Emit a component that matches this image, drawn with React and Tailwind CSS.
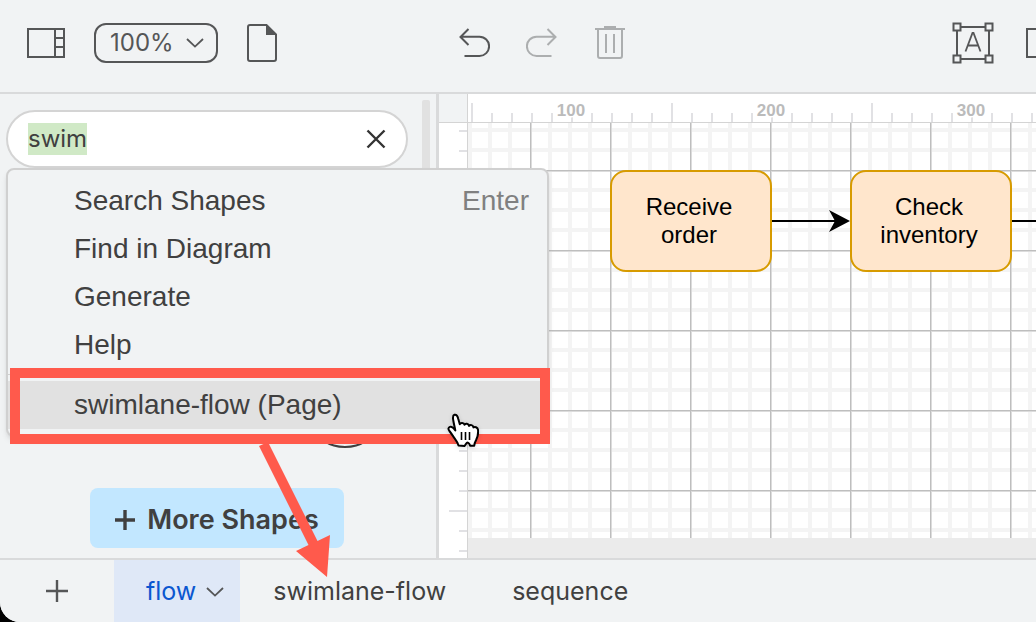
import React, { useEffect, useRef, useState } from "react";

const menuItems = [
  { label: "Search Shapes", shortcut: "Enter" },
  { label: "Find in Diagram" },
  { label: "Generate" },
  { label: "Help" },
];

const pages = ["flow", "swimlane-flow", "sequence"];

// --- Icons ---
const ChevronDown = () => (
  <svg width="18" height="10" viewBox="0 0 18 10" fill="none" stroke="currentColor" strokeWidth="1.8" aria-hidden="true">
    <path d="M1 1l8 7.6L17 1" />
  </svg>
);

const PanelIcon = () => (
  <svg width="38" height="30" viewBox="0 0 38 30" fill="none" stroke="currentColor" strokeWidth="2" aria-hidden="true">
    <path d="M1 1h36v28H1zM28 1v28M28 10h9M28 19h9" />
  </svg>
);

const FileIcon = () => (
  <svg width="30" height="38" viewBox="0 0 30 38" fill="none" stroke="currentColor" strokeWidth="2" aria-hidden="true">
    <path d="M3 1h16.5L29 10.5V35a2 2 0 0 1-2 2H3a2 2 0 0 1-2-2V3a2 2 0 0 1 2-2z" />
    <path d="M19 1v10h10z" fill="currentColor" stroke="none" />
  </svg>
);

const UndoIcon = () => (
  <svg width="32" height="30" viewBox="-1 0 32 30" fill="none" stroke="currentColor" strokeWidth="2" aria-hidden="true">
    <path d="M9.5 1L1.5 9l8 8M1.5 8.7H20.5a9.6 9.6 0 0 1 0 19.2H5.5" />
  </svg>
);

const TrashIcon = () => (
  <svg width="32" height="34" viewBox="-1 0 32 34" fill="none" stroke="currentColor" strokeWidth="2" aria-hidden="true">
    <path d="M0 3h30M9 1h12M3 3v27a2 2 0 0 0 2 2h20a2 2 0 0 0 2-2V3M11 8v19M19 8v19" />
  </svg>
);

const TextIcon = () => (
  <svg width="42" height="42" viewBox="0 0 42 42" fill="none" stroke="currentColor" strokeWidth="2" aria-hidden="true">
    <path d="M9 5h24M9 37h24M5 9v24M37 9v24" />
    <path d="M1.5 1.5h7v7h-7zM33.5 1.5h7v7h-7zM1.5 33.5h7v7h-7zM33.5 33.5h7v7h-7z" />
    <path d="M13.5 29.5L20.5 11h1l7 18.5M16 23.5h10" strokeWidth="1.8" />
  </svg>
);

const HandCursor = () => (
  <svg width="32" height="35" viewBox="0 0 32 35" className="drop-shadow-sm" aria-hidden="true">
    <path
      d="M11.5 32.5c-.6-2.300-2-4.500-3.700-6.800-1.500-2-3.300-5.200-5.400-7.700-1.600-2.100-1-3.500.5-4.100 1.700-.6 3.500 1 5.400 3.600-.5-3.500-1.500-6.500-2-10-.6-3-.9-5 1.100-5.700 2.100-.6 3.200 1.300 3.900 4.200l1.500 5.300c.6-2 4.200-1.900 4.700.5.900-1.600 4-1.300 4.600 1.100 1-1.500 3.800-1 4.400 1.500 1.200-1 4.100-.3 4.500 2.300.5 4-.5 7.500-2 10.500-1 1.800-1.700 3.300-1.800 5.600h-4.100c-.3-1.300-1.600-3.300-2.600-3.300s-2 2.500-3 3.400z"
      fill="#fff"
      stroke="#000"
      strokeWidth="2"
      strokeLinejoin="round"
    />
    <path d="M14.5 19v8M18.5 19v8M22.5 19v8" stroke="#000" strokeWidth="1.6" />
  </svg>
);

const Toolbar = () => (
  <header className="flex shrink-0 items-center h-[94px] pb-1.5 border-b-2 border-[#d9dadb] bg-[#f1f3f4] text-[#555657] overflow-hidden">
    <div className="flex items-center gap-[29px] pl-[27px] w-[439px] shrink-0">
      <button aria-label="Shapes panel"><PanelIcon /></button>
      <button className="flex items-center justify-between w-[124px] h-10 px-3 border-2 border-[#555657] rounded-xl text-2xl">
        <span className="pl-0.5">100%</span>
        <ChevronDown />
      </button>
      <button aria-label="New page"><FileIcon /></button>
    </div>
    <div className="flex items-center gap-9 pl-[19px] flex-1">
      <button aria-label="Undo"><UndoIcon /></button>
      <button aria-label="Redo" className="text-[#acaeaf] -scale-x-100"><UndoIcon /></button>
      <button aria-label="Delete" className="text-[#acaeaf]"><TrashIcon /></button>
    </div>
    <div className="flex items-center gap-8 w-[84px] shrink-0 overflow-hidden">
      <button aria-label="Text" className="shrink-0"><TextIcon /></button>
      <button aria-label="Rectangle" className="shrink-0 w-10 h-[30px] border-2 border-[#555657]" />
    </div>
  </header>
);

const SearchMenu = () => (
  <div className="absolute left-1.5 top-[74px] z-10 w-[543px] pt-[7px] pb-1.5 rounded-lg border-2 border-[#d0d0d0] bg-[#f1f3f4] shadow-md text-[28px] leading-[48px] text-[#404040] font-['Liberation_Sans',sans-serif]">
    {menuItems.map((item) => (
      <button key={item.label} className="flex justify-between w-full h-12 pl-[66px] pr-[18px]">
        <span>{item.label}</span>
        <span className="text-[#808080]">{item.shortcut}</span>
      </button>
    ))}
    <hr className="mt-[5px] mb-1.5 border-[#d0d0d0]" />
    <button className="flex w-full h-12 pl-[66px] bg-[#e1e1e1]">swimlane-flow (Page)</button>
  </div>
);

const Sidebar = () => {
  const [query, setQuery] = useState("swim");
  const inputRef = useRef(null);

  useEffect(() => {
    inputRef.current.focus();
    inputRef.current.select();
  }, []);

  return (
    <aside className="relative flex flex-col shrink-0 w-[439px] border-r-[3px] border-[#d9dadb] bg-[#f1f3f4]">
      <div className="flex items-start gap-3.5 pl-1.5 pt-1.5">
        <div className="flex items-center w-[402px] h-[58px] mt-2.5 px-5 rounded-full border-2 border-[#d4d4d4] bg-white">
          <input
            ref={inputRef}
            aria-label="Search shapes"
            value={query}
            onChange={(e) => setQuery(e.target.value)}
            className="min-w-0 flex-1 text-2xl text-[#404040] outline-none selection:bg-[#d0e9c6] selection:text-[#404040]"
          />
          <button aria-label="Clear search" onClick={() => setQuery("")}>
            <svg width="20" height="20" viewBox="0 0 20 20" stroke="#333" strokeWidth="2.4">
              <path d="M1.5 1.5l17 17M18.5 1.5l-17 17" />
            </svg>
          </button>
        </div>
        <div className="w-2 h-40 rounded-xs bg-[#e1e1e1]" />
      </div>
      <div className="flex flex-1 items-end justify-end pr-[61px] pb-10">
        <svg width="60" height="42" viewBox="0 0 60 42" fill="none" stroke="#404040" strokeWidth="2" aria-hidden="true">
          <ellipse cx="30" cy="21" rx="29" ry="20" />
        </svg>
      </div>
      <button className="flex items-center justify-center gap-3 ml-[90px] mb-2.5 w-[254px] h-[60px] pt-1 rounded-lg bg-[#c2e7ff] text-[27px] font-semibold text-[#404040]">
        <svg width="20" height="20" viewBox="0 0 20 20" stroke="currentColor" strokeWidth="3.4" aria-hidden="true">
          <path d="M0 10h20M10 0v20" />
        </svg>
        More Shapes
      </button>
      <SearchMenu />
    </aside>
  );
};

// --- Rulers ---
const HorizontalRuler = () => (
  <svg className="flex-1 h-[29px] min-w-0 border-b border-[#d4d4d4] bg-white" aria-hidden="true">
    <defs>
      <pattern id="ticks-x" x="3" width="200" height="28" patternUnits="userSpaceOnUse">
        <path
          d="M1 9v19M21 19v9M41 19v9M61 19v9M81 19v9M101 19v9M121 19v9M141 19v9M161 19v9M181 19v9"
          stroke="#e1e1e4"
          strokeWidth="2"
        />
      </pattern>
    </defs>
    <rect width="100%" height="28" fill="url(#ticks-x)" />
    <g fill="#bbb" stroke="#fff" strokeWidth="3" paintOrder="stroke" fontSize="17" fontWeight="600" textAnchor="middle" fontFamily="Liberation Sans, sans-serif">
      <text x="103" y="22">100</text>
      <text x="303" y="22">200</text>
      <text x="503" y="22">300</text>
    </g>
  </svg>
);

const VerticalRuler = () => (
  <svg className="w-[29px] shrink-0 h-full border-r border-[#d4d4d4] bg-white" aria-hidden="true">
    <defs>
      <pattern id="ticks-y" y="-13" width="28" height="200" patternUnits="userSpaceOnUse">
        <path
          d="M10 1h18M20 21h8M20 41h8M20 61h8M20 81h8M20 101h8M20 121h8M20 141h8M20 161h8M20 181h8"
          stroke="#e1e1e4"
          strokeWidth="2"
        />
      </pattern>
    </defs>
    <rect width="28" height="100%" fill="url(#ticks-y)" />
  </svg>
);

const Node = ({ className, children }) => (
  <div
    className={`absolute top-[47px] flex items-center justify-center w-[162px] h-[102px] pl-6 pr-7 rounded-2xl border-2 border-[#d79b00] bg-[#ffe6cc] text-center text-2xl leading-7 text-black font-['Liberation_Sans',sans-serif] ${className}`}
  >
    {children}
  </div>
);

const Canvas = () => (
  <main className="flex flex-col flex-1 min-w-0">
    <div className="flex shrink-0">
      <div className="w-[29px] h-[29px] shrink-0 border-r border-b border-[#d4d4d4] bg-[#f1f3f4]" />
      <HorizontalRuler />
    </div>
    <div className="flex flex-1 min-h-0">
      <VerticalRuler />
      <div className="flex flex-col flex-1 min-w-0">
        <div className="relative flex-1 overflow-hidden bg-white">
          <svg className="block w-full h-full" aria-hidden="true">
            <defs>
              <pattern id="grid" x="62" y="47" width="80" height="80" patternUnits="userSpaceOnUse">
                <path d="M20 0v80M40 0v80M60 0v80M0 20h80M0 40h80M0 60h80" stroke="#f4f4f4" strokeWidth="4" />
                <path d="M1.5 0v80M0 1.5h80" stroke="#dcdcdc" />
                <path d="M.5 0v80M0 .5h80" stroke="#bebebe" />
              </pattern>
            </defs>
            <rect width="100%" height="100%" fill="url(#grid)" />
            <path d="M304 98h64M544 98h400" stroke="#000" strokeWidth="2" />
            <path d="M382 98l-21 11 6-11-6-11z" />
          </svg>
          <Node className="left-[142px]">Receive order</Node>
          <Node className="left-[382px]">Check inventory</Node>
        </div>
        <div className="h-5 shrink-0 bg-[#ebebeb]" />
      </div>
    </div>
  </main>
);

const PageTabs = () => {
  const [active, setActive] = useState("flow");

  return (
    <footer className="flex shrink-0 h-16 border-t-2 border-[#d9dadb] bg-[#f1f3f4] text-[25px] text-[#404040]">
      <button aria-label="Insert page" className="flex items-center justify-center w-[114px]">
        <svg width="22" height="22" viewBox="0 0 22 22" stroke="#555657" strokeWidth="2.4">
          <path d="M0 11h22M11 0v22" />
        </svg>
      </button>
      {pages.map((page) => (
        <button
          key={page}
          onClick={() => setActive(page)}
          className={`flex items-center pt-0.5 ${
            page === active ? "gap-2.5 pl-8 pr-4 bg-[#dfe8f7] text-[#0b57d0]" : "px-[33px]"
          }`}
        >
          {page}
          {page === active && <span className="text-[#555657]"><ChevronDown /></span>}
        </button>
      ))}
    </footer>
  );
};

// --- Red callout with the arrow that points at the page tab ---
const Callout = () => (
  <div className="absolute left-2.5 top-[368px] z-20 pointer-events-none">
    <div className="w-[540px] h-[76px] border-[10px] border-[#ff5a4c]" />
    <svg width="90" height="134" viewBox="0 0 90 134" className="ml-[240px]" fill="#ff5a4c" aria-hidden="true">
      <path d="M9 2L18 -2L67.5 97L80 91L77 133L46 107L58.5 101z" />
    </svg>
    <div className="absolute left-[437px] top-[45px]"><HandCursor /></div>
  </div>
);

const App = () => {
  return (
    <div className="h-screen bg-black">
      <div className="relative flex flex-col h-full overflow-hidden rounded-bl-[20px] bg-[#f1f3f4] font-[Inter,sans-serif]">
        <Toolbar />
        <div className="flex flex-1 min-h-0">
          <Sidebar />
          <Canvas />
        </div>
        <PageTabs />
        <Callout />
      </div>
    </div>
  );
};

export default App;
